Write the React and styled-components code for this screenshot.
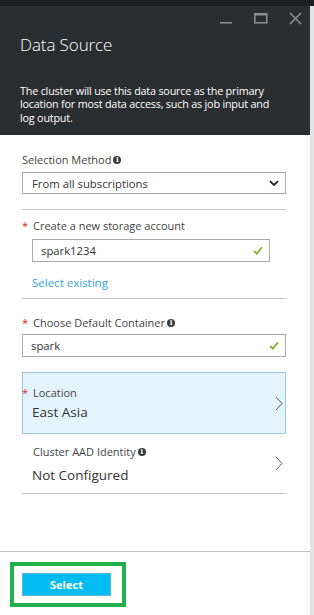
import React from 'react';
import styled, { createGlobalStyle } from 'styled-components';

const GlobalStyle = createGlobalStyle`
  html, body {
    margin: 0;
    padding: 0;
    background: #ffffff;
  }
  body {
    font-family: "Open Sans", "Noto Sans", sans-serif;
    color: #333333;
  }
`;

const Page = styled.div`
  width: 314px;
  height: 615px;
  display: flex;
  flex-direction: column;
  overflow: hidden;
`;

const TopBand = styled.div`
  height: 6px;
  background: #1d1f21;
`;

const Body = styled.div`
  flex: 1;
  display: flex;
`;

const Blade = styled.div`
  width: 310px;
  display: flex;
  flex-direction: column;
`;

const Scroller = styled.div`
  width: 4px;
  background: #e3e3e3;
`;

const Header = styled.div`
  height: 129px;
  flex-shrink: 0;
  box-sizing: border-box;
  background: #2b2e31;
  color: #ffffff;
  padding: 0 0 0 20px;
  display: flex;
  flex-direction: column;
  align-items: flex-start;
`;

const WindowControls = styled.div`
  align-self: stretch;
  display: flex;
  justify-content: flex-end;
  align-items: center;
  gap: 21px;
  height: 13px;
  padding: 6px 8px 0 0;
`;

const Title = styled.h1`
  margin: 9px 0 0;
  font-size: 17px;
  font-weight: 300;
  line-height: 22px;
  letter-spacing: -0.1px;
`;

const Description = styled.p`
  margin: 28px 0 0;
  font-size: 10.8px;
  line-height: 13.3px;
  width: 255px;
  letter-spacing: -0.2px;
`;

const Content = styled.div`
  flex: 1;
  padding: 18px 24px 0 22px;
  display: flex;
  flex-direction: column;
`;

const Label = styled.div`
  display: flex;
  align-items: center;
  height: 14px;
  font-size: 11px;
  line-height: 14px;
  color: #444;
  margin-left: ${p => p.indent || 0}px;
  margin-top: ${p => p.top || 0}px;
`;

const Star = styled.span`
  color: #d4272a;
  font-size: 11px;
  line-height: 14px;
  width: 11px;
  margin-left: ${p => p.shift || 0}px;
`;

const InfoDot = styled.span`
  width: 8px;
  height: 8px;
  border-radius: 50%;
  background: #3a3a3a;
  color: #fff;
  font-size: 7px;
  font-weight: 700;
  line-height: 8px;
  text-align: center;
  margin-left: 2px;
  font-family: "DejaVu Serif", serif;
`;

const Field = styled.div`
  box-sizing: border-box;
  height: ${p => p.h || 22}px;
  border: 1px solid #aaaaaa;
  display: flex;
  align-items: center;
  justify-content: space-between;
  padding: 0 6px 0 ${p => p.pl || 8}px;
  margin: ${p => p.top || 0}px ${p => p.right || 0}px 0 ${p => p.left || 0}px;
  font-size: 11.3px;
  color: #333;
`;

const Separator = styled.div`
  height: 1px;
  background: #c6c6c6;
  margin-top: ${p => p.top}px;
`;

const Link = styled.div`
  color: #2fa3da;
  font-size: 11.5px;
  line-height: 16px;
  margin: 13px 0 0 10px;
`;

const NavRow = styled.div`
  box-sizing: border-box;
  height: ${p => p.h}px;
  margin-top: ${p => p.top}px;
  display: flex;
  align-items: center;
  justify-content: space-between;
  padding: 0 2px 0 0;
  background: ${p => (p.active ? '#e4f4fc' : 'transparent')};
  border: 1px solid ${p => (p.active ? '#9ccae6' : 'transparent')};
`;

const NavText = styled.div`
  display: flex;
  flex-direction: column;
  gap: ${p => p.gap}px;
`;

const NavValue = styled.div`
  font-size: 13.5px;
  line-height: 16px;
  color: #333;
  margin-left: 9px;
`;

const Footer = styled.div`
  height: 64px;
  box-sizing: border-box;
  border-top: 1px solid #c0c0c0;
  padding: 10px 0 0 10px;
`;

const Highlight = styled.div`
  width: 116px;
  height: 45px;
  box-sizing: border-box;
  border: 4px solid #22b14c;
  padding: 7px 0 0 8px;
`;

const PrimaryButton = styled.button`
  display: block;
  width: 89px;
  height: 23px;
  box-sizing: border-box;
  border: 1px solid #5fb7db;
  background: #00bcf2;
  color: #ffffff;
  font-family: "Open Sans", sans-serif;
  font-size: 11px;
  font-weight: 700;
  padding: 0;
`;

const Check = () => (
  <svg width="10" height="9" viewBox="0 0 10 9">
    <path d="M1 5 L3.8 7.6 L9 1.2" fill="none" stroke="#7ab32e" strokeWidth="1.8" />
  </svg>
);

const ChevronRight = () => (
  <svg width="8" height="15" viewBox="0 0 8 15">
    <path d="M1 1 L7 7.5 L1 14" fill="none" stroke="#555" strokeWidth="1" />
  </svg>
);

const ChevronDown = () => (
  <svg width="10" height="7" viewBox="0 0 10 7">
    <path d="M1 1.2 L5 5 L9 1.2" fill="none" stroke="#222" strokeWidth="1.8" />
  </svg>
);

export default function App() {
  return (
    <Page>
      <GlobalStyle />
      <TopBand />
      <Body>
        <Blade>
          <Header>
            <WindowControls>
              <svg width="13" height="13" viewBox="0 0 13 13">
                <rect x="0" y="10" width="12" height="1.6" fill="#8a8d90" />
              </svg>
              <svg width="14" height="13" viewBox="0 0 14 13">
                <rect x="0.8" y="1.8" width="12" height="9" fill="none" stroke="#8a8d90" strokeWidth="1.6" />
                <rect x="0.8" y="1" width="12" height="2.5" fill="#8a8d90" />
              </svg>
              <svg width="13" height="13" viewBox="0 0 13 13">
                <path d="M1 1 L12 12 M12 1 L1 12" stroke="#8a8d90" strokeWidth="1.6" />
              </svg>
            </WindowControls>
            <Title>Data Source</Title>
            <Description>
              The cluster will use this data source as the primary location for most data access, such as job input and log output.
            </Description>
          </Header>
          <Content>
            <Label>Selection Method<InfoDot>i</InfoDot></Label>
            <Field top={5} pl={9} h={22}>
              From all subscriptions
              <ChevronDown />
            </Field>
            <Separator top={15} />
            <Label top={9}><Star>*</Star>Create a new storage account</Label>
            <Field top={6} left={10} right={16} h={23}>
              spark1234
              <Check />
            </Field>
            <Link>Select existing</Link>
            <Separator top={7} />
            <Label top={17}><Star>*</Star>Choose Default Container<InfoDot>i</InfoDot></Label>
            <Field top={4} h={23}>
              spark
              <Check />
            </Field>
            <NavRow active h={62} top={15}>
              <NavText gap={4}>
                <Label><Star shift={-1}>*</Star>Location</Label>
                <NavValue>East Asia</NavValue>
              </NavText>
              <ChevronRight />
            </NavRow>
            <NavRow h={59} top={0}>
              <NavText gap={8}>
                <Label indent={10}>Cluster AAD Identity<InfoDot>i</InfoDot></Label>
                <NavValue>Not Configured</NavValue>
              </NavText>
              <ChevronRight />
            </NavRow>
            <Separator top={0} />
          </Content>
          <Footer>
            <Highlight>
              <PrimaryButton>Select</PrimaryButton>
            </Highlight>
          </Footer>
        </Blade>
        <Scroller />
      </Body>
    </Page>
  );
}
